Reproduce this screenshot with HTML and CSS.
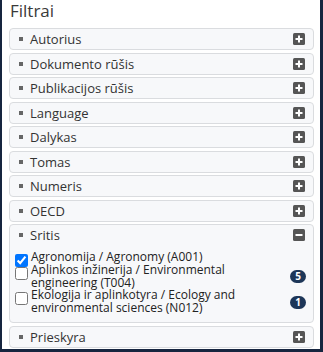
FILE: index.html
```html
<!DOCTYPE html>
<html lang="lt">
<head>
  <meta charset="UTF-8" />
  <meta name="viewport" content="width=device-width, initial-scale=1.0"/>
  <title>Filtrai</title>
  <link rel="stylesheet" href="styles.css">
</head>
<body>
  <div class="filtrai">
    <h2 class="filtrai-title">Filtrai</h2>

    <div class="facet">
      <div class="facet-head"><span class="facet-name">Autorius</span>
        <svg class="toggle" viewBox="0 0 12 12"><rect width="12" height="12" rx="1.5"/><path d="M6 2.5v7M2.5 6h7"/></svg></div>
    </div>
    <div class="facet">
      <div class="facet-head"><span class="facet-name">Dokumento rūšis</span>
        <svg class="toggle" viewBox="0 0 12 12"><rect width="12" height="12" rx="1.5"/><path d="M6 2.5v7M2.5 6h7"/></svg></div>
    </div>
    <div class="facet">
      <div class="facet-head"><span class="facet-name">Publikacijos rūšis</span>
        <svg class="toggle" viewBox="0 0 12 12"><rect width="12" height="12" rx="1.5"/><path d="M6 2.5v7M2.5 6h7"/></svg></div>
    </div>
    <div class="facet">
      <div class="facet-head"><span class="facet-name">Language</span>
        <svg class="toggle" viewBox="0 0 12 12"><rect width="12" height="12" rx="1.5"/><path d="M6 2.5v7M2.5 6h7"/></svg></div>
    </div>
    <div class="facet">
      <div class="facet-head"><span class="facet-name">Dalykas</span>
        <svg class="toggle" viewBox="0 0 12 12"><rect width="12" height="12" rx="1.5"/><path d="M6 2.5v7M2.5 6h7"/></svg></div>
    </div>
    <div class="facet">
      <div class="facet-head"><span class="facet-name">Tomas</span>
        <svg class="toggle" viewBox="0 0 12 12"><rect width="12" height="12" rx="1.5"/><path d="M6 2.5v7M2.5 6h7"/></svg></div>
    </div>
    <div class="facet">
      <div class="facet-head"><span class="facet-name">Numeris</span>
        <svg class="toggle" viewBox="0 0 12 12"><rect width="12" height="12" rx="1.5"/><path d="M6 2.5v7M2.5 6h7"/></svg></div>
    </div>
    <div class="facet">
      <div class="facet-head"><span class="facet-name">OECD</span>
        <svg class="toggle" viewBox="0 0 12 12"><rect width="12" height="12" rx="1.5"/><path d="M6 2.5v7M2.5 6h7"/></svg></div>
    </div>

    <div class="facet open">
      <div class="facet-head"><span class="facet-name">Sritis</span>
        <svg class="toggle" viewBox="0 0 12 12"><rect width="12" height="12" rx="1.5"/><path d="M2.5 6h7"/></svg></div>
      <ul class="facet-list">
        <li class="facet-item">
          <input type="checkbox" checked />
          <span class="item-label">Agronomija / Agronomy (A001)</span>
        </li>
        <li class="facet-item">
          <input type="checkbox" />
          <span class="item-label">Aplinkos inžinerija / Environmental engineering (T004)</span>
          <span class="badge">5</span>
        </li>
        <li class="facet-item">
          <input type="checkbox" />
          <span class="item-label">Ekologija ir aplinkotyra / Ecology and environmental sciences (N012)</span>
          <span class="badge">1</span>
        </li>
      </ul>
    </div>

    <div class="facet">
      <div class="facet-head"><span class="facet-name">Prieskyra</span>
        <svg class="toggle" viewBox="0 0 12 12"><rect width="12" height="12" rx="1.5"/><path d="M6 2.5v7M2.5 6h7"/></svg></div>
    </div>
  </div>
</body>
</html>
```

FILE: styles.css
```css
body {
  margin: 0;
  background: #fff;
  font-family: "Open Sans", Arial, sans-serif;
  color: #333;
}
.filtrai {
  height: 349px;
  overflow: hidden;
  padding: 0 6px 0 7px;
  border-left: 2px solid #16253f;
  border-right: 3px solid #16253f;
  border-bottom: 3px solid #16253f;
}
.filtrai-title {
  margin: 0 0 6px;
  padding-left: 1px;
  font-size: 17px;
  font-weight: normal;
  line-height: 22px;
  color: #3a3a3a;
}
.facet {
  margin-bottom: 2.5px;
  background: #f7f8fa;
  border: 1px solid #dadcdf;
  border-radius: 4px;
}
.facet-head {
  display: flex;
  align-items: center;
  height: 20px;
  padding: 0 8px 0 9px;
  font-size: 13px;
}
.facet-name {
  flex: 1;
  display: flex;
  align-items: center;
}
.facet-name::before {
  content: "";
  width: 4px;
  height: 4px;
  margin-right: 7px;
  background: #666;
}
.toggle {
  width: 12px;
  height: 12px;
  flex: none;
}
.toggle rect {
  fill: #555;
}
.toggle path {
  stroke: #fff;
  stroke-width: 2;
  fill: none;
}
.facet-list {
  list-style: none;
  margin: 0;
  padding: 6px 7px 7.25px 1px;
}
.facet-item {
  display: flex;
  align-items: flex-start;
  font-size: 12px;
  line-height: 12.75px;
  color: #222;
}
.facet-item input {
  flex: none;
  width: 13px;
  height: 13px;
  margin: 3px 3px -8px 4px;
}
.item-label {
  flex: 1;
}
.badge {
  align-self: center;
  flex: none;
  width: 16px;
  height: 13px;
  margin-left: 8px;
  border-radius: 7px;
  background: #1d3658;
  color: #fff;
  font-size: 10px;
  font-weight: bold;
  line-height: 13px;
  text-align: center;
}
```
